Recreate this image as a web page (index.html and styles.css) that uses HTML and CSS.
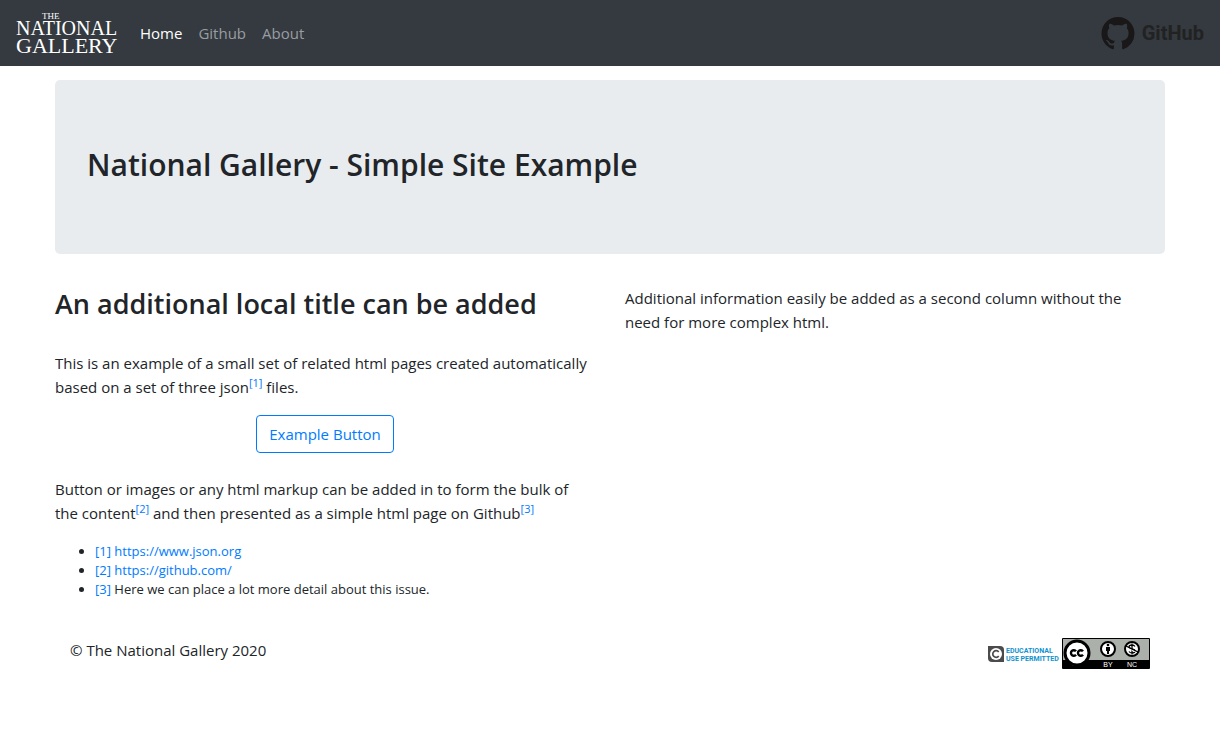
FILE: index.html
```html
<!DOCTYPE html>
<html lang="en">
<head>
<meta charset="utf-8">
<meta name="viewport" content="width=device-width, initial-scale=1">
<title>National Gallery - Simple Site Example</title>
<link rel="stylesheet" href="styles.css">
</head>
<body>
<nav class="navbar">
  <a class="brand" href="#" aria-label="The National Gallery">
    <svg width="102" height="50" viewBox="0 0 102 50" fill="#fff" font-family="'Liberation Serif', serif">
      <text x="26" y="11" font-size="9">THE</text>
      <text x="0" y="27" font-size="20">NATIONAL</text>
      <text x="0" y="45" font-size="22">GALLERY</text>
    </svg>
  </a>
  <ul class="nav-links">
    <li><a class="nav-link active" href="#">Home</a></li>
    <li><a class="nav-link" href="#">Github</a></li>
    <li><a class="nav-link" href="#">About</a></li>
  </ul>
  <a class="github" href="#" aria-label="GitHub">
    <svg width="34" height="33" viewBox="0 0 16 16" fill="#191717"><path d="M8 0C3.58 0 0 3.58 0 8c0 3.54 2.29 6.53 5.47 7.59.4.07.55-.17.55-.38 0-.19-.01-.82-.01-1.49-2.01.37-2.53-.49-2.69-.94-.09-.23-.48-.94-.82-1.13-.28-.15-.68-.52-.01-.53.63-.01 1.08.58 1.23.82.72 1.21 1.87.87 2.33.66.07-.52.28-.87.51-1.07-1.78-.2-3.64-.89-3.64-3.95 0-.87.31-1.59.82-2.15-.08-.2-.36-1.02.08-2.12 0 0 .67-.21 2.2.82.64-.18 1.32-.27 2-.27s1.36.09 2 .27c1.53-1.04 2.2-.82 2.2-.82.44 1.1.16 1.92.08 2.12.51.56.82 1.27.82 2.15 0 3.07-1.87 3.75-3.65 3.95.29.25.54.73.54 1.48 0 1.07-.01 1.93-.01 2.2 0 .21.15.46.55.38A8.01 8.01 0 0 0 16 8c0-4.42-3.58-8-8-8z"/></svg>
    <span class="github-name">GitHub</span>
  </a>
</nav>
<div class="container">
  <header class="jumbotron"><h1>National Gallery - Simple Site Example</h1></header>
  <main class="columns">
    <section>
      <h2>An additional local title can be added</h2>
      <p>This is an example of a small set of related html pages created automatically based on a set of three json<sup><a href="#n1">[1]</a></sup> files.</p>
      <div class="button-row"><button class="btn" type="button">Example Button</button></div>
      <p>Button or images or any html markup can be added in to form the bulk of the content<sup><a href="#n2">[2]</a></sup> and then presented as a simple html page on Github<sup><a href="#n3">[3]</a></sup></p>
      <ul class="notes">
        <li id="n1"><a href="#">[1]</a> <a href="https://www.json.org">https://www.json.org</a></li>
        <li id="n2"><a href="#">[2]</a> <a href="https://github.com/">https://github.com/</a></li>
        <li id="n3"><a href="#">[3]</a> Here we can place a lot more detail about this issue.</li>
      </ul>
    </section>
    <section class="aside">
      <p>Additional information easily be added as a second column without the need for more complex html.</p>
    </section>
  </main>
  <footer class="footer">
    <span>© The National Gallery 2020</span>
    <div class="badges">
      <a href="#" aria-label="Educational use permitted">
        <svg width="74" height="31" viewBox="0 0 74 31">
          <path d="M0 8H12Q16 8 16 12V24H4Q0 24 0 20Z" fill="#4b4b4d"/>
          <circle cx="8" cy="16" r="6" fill="#fff"/>
          <path d="M10.700 14A3.300 3.300 0 1 0 10.700 18" fill="none" stroke="#4b4b4d" stroke-width="1.700"/>
          <g class="permit">
            <text x="18" y="15">EDUCATIONAL</text>
            <text x="18" y="23">USE PERMITTED</text>
          </g>
        </svg>
      </a>
      <a href="#" aria-label="Creative Commons BY NC">
        <svg width="88" height="31" viewBox="0 0 88 31">
          <rect width="88" height="31" rx="1" fill="#000"/>
          <rect x="1" y="1" width="86" height="21" fill="#abb1aa"/>
          <path d="M1 22H5Q8 28 14 28Q21 28 24 22Z" fill="#abb1aa"/>
          <circle cx="15" cy="15" r="12" fill="#fff" stroke="#000" stroke-width="3"/>
          <g fill="none" stroke="#000" stroke-width="2.400"><path d="M14 13.300A2.800 2.800 0 1 0 14 16.700M21 13.300A2.800 2.800 0 1 0 21 16.700"/></g>
          <circle cx="46" cy="11" r="7" fill="#fff" stroke="#000" stroke-width="2"/>
          <circle cx="46" cy="7" r="1.300"/>
          <path d="M44 9H48V13H47V16H45V13H44Z"/>
          <circle cx="70" cy="11" r="7" fill="#fff" stroke="#000" stroke-width="2"/>
          <path d="M73 8.500Q72 7 70 7Q67 7 67 9Q67 10.500 70 11Q73 11.500 73 13Q73 15 70 15Q68 15 67 13.500M70 5.500V16.500" fill="none" stroke="#000" stroke-width="1.300"/>
          <path d="M64.500 9.500L75 14.500" stroke="#fff" stroke-width="1"/>
          <path d="M64 8L76 14" stroke="#000" stroke-width="1.300"/>
          <g fill="#fff" font-family="'Liberation Sans', sans-serif" font-size="7" text-anchor="middle">
            <text x="46" y="29">BY</text><text x="70" y="29">NC</text>
          </g>
        </svg>
      </a>
    </div>
  </footer>
</div>
</body>
</html>
```
FILE: styles.css
```css
* { box-sizing: border-box; }
body {
  margin: 0;
  background: #fff;
  color: #212529;
  font: 400 15px/24px "Open Sans", "Noto Sans", sans-serif;
}
a { color: #007bff; text-decoration: none; }
h1, h2, p { margin: 0; }
h1 { font-size: 30px; line-height: 38px; font-weight: 600; }
h2 { font-size: 27px; line-height: 35px; font-weight: 600; margin-bottom: 30px; }
.navbar {
  display: flex;
  align-items: center;
  min-height: 66px;
  padding: 8px 16px;
  background: #343a40;
}
.brand { display: flex; margin-right: 14px; }
.nav-links { display: flex; flex: 1; margin: 0; padding: 0; list-style: none; }
.nav-link { display: block; padding: 8px; color: #9a9da0; }
.nav-link.active { color: #fff; }
.github { display: flex; align-items: center; gap: 7px; color: #222; }
.github-name { font: 700 20px/24px Roboto, sans-serif; }
.container { max-width: 1140px; margin: 14px auto 0; padding: 0 15px; }
.jumbotron {
  padding: 66px 32px 70px;
  margin-bottom: 32px;
  border-radius: 5px;
  background: #e9ecef;
}
.columns { display: grid; grid-template-columns: 1fr 1fr; gap: 30px; }
.aside { padding-right: 16px; }
.button-row { display: flex; justify-content: center; margin: 16px 0 24px; }
.btn {
  padding: 6px 12px;
  border: 1px solid #007bff;
  border-radius: 4px;
  background: transparent;
  color: #007bff;
  font: inherit;
}
sup { font-size: 11px; line-height: 0; vertical-align: 6px; }
.notes { margin: 17px 0 0; padding-left: 40px; font-size: 13px; line-height: 19px; }
.footer {
  display: flex;
  justify-content: space-between;
  align-items: flex-start;
  margin-top: 39px;
  padding: 0 15px;
}
.badges, .badges a { display: flex; }
.permit { fill: #0f93cf; font: 700 7px/8px Roboto, sans-serif; }
```
